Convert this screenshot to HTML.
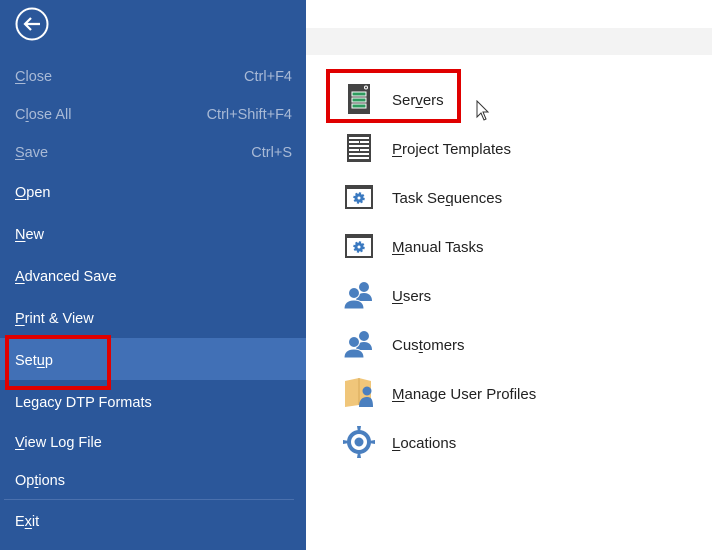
<!DOCTYPE html>
<html><head><meta charset="utf-8"><style>
body{margin:0;width:712px;height:550px;position:relative;background:#fff;font-family:"Liberation Sans",sans-serif;overflow:hidden}
#side{position:absolute;left:0;top:0;width:306px;height:550px;background:#2b579a}
.it{position:absolute;left:15px;font-size:14.5px;color:#fff;line-height:18px;transform:translateY(-7px)}
.dis{color:#a9bad6}
.sc{position:absolute;right:14px;font-size:14.5px;color:#a9bad6;line-height:18px;transform:translateY(-7px)}
.r{position:absolute;left:392px;font-size:15px;color:#222;line-height:18px;transform:translateY(-7px)}
.ic{position:absolute;left:343px;width:32px;height:32px;transform:translateY(-16px)}
u{text-decoration:underline;text-underline-offset:2px}
</style></head><body>
<div id="side">
<svg style="position:absolute;left:15px;top:7px" width="34" height="34" viewBox="0 0 34 34"><circle cx="17" cy="17" r="15.5" fill="none" stroke="#fff" stroke-width="2"/><path d="M25 17H10M16 11l-6 6 6 6" fill="none" stroke="#fff" stroke-width="2.2"/></svg>
<div style="position:absolute;left:0;top:338px;width:306px;height:42px;background:#4170b6"></div>
<div style="position:absolute;left:5px;top:335px;width:98px;height:47px;border:4px solid #e00000"></div>
<div style="position:absolute;left:4px;top:499px;width:290px;height:1px;background:#4a70ad"></div>
<div class="it dis" style="top:75px"><u>C</u>lose</div><div class="sc" style="top:75px">Ctrl+F4</div>
<div class="it dis" style="top:113px">C<u>l</u>ose All</div><div class="sc" style="top:113px">Ctrl+Shift+F4</div>
<div class="it dis" style="top:151px"><u>S</u>ave</div><div class="sc" style="top:151px">Ctrl+S</div>
<div class="it" style="top:191px"><u>O</u>pen</div>
<div class="it" style="top:233px"><u>N</u>ew</div>
<div class="it" style="top:275px"><u>A</u>dvanced Save</div>
<div class="it" style="top:317px"><u>P</u>rint &amp; View</div>
<div class="it" style="top:359px">Set<u>u</u>p</div>
<div class="it" style="top:401px">Legacy DTP Formats</div>
<div class="it" style="top:441px"><u>V</u>iew Log File</div>
<div class="it" style="top:479px">Op<u>t</u>ions</div>
<div class="it" style="top:520px">E<u>x</u>it</div>
</div>
<div style="position:absolute;left:306px;top:28px;width:406px;height:27px;background:#f3f3f3"></div>
<div style="position:absolute;left:326px;top:69px;width:127px;height:46px;border:4px solid #e00000"></div>
<svg style="position:absolute;left:476px;top:100px" width="14" height="22" viewBox="0 0 14 22"><path d="M1 1v16l4-4 3 7 2-1-3-7h5z" fill="#fff" stroke="#333" stroke-width="1"/></svg>

<svg class="ic" style="top:99px" viewBox="0 0 32 32"><rect x="5" y="1" width="22" height="30" fill="#444"/><circle cx="23" cy="4.5" r="1.5" fill="none" stroke="#fff"/><rect x="9" y="9" width="14" height="4" fill="#2e9b5e" stroke="#fff"/><rect x="9" y="15" width="14" height="4" fill="#2e9b5e" stroke="#fff"/><rect x="9" y="21" width="14" height="4" fill="#2e9b5e" stroke="#fff"/></svg>
<div class="r" style="top:99px">Ser<u>v</u>ers</div>
<svg class="ic" style="top:148px" viewBox="0 0 32 32"><rect x="4" y="2" width="24" height="28" fill="#444"/><g fill="#fff"><rect x="6" y="5" width="20" height="2"/><rect x="6" y="9" width="10" height="2"/><rect x="17" y="9" width="9" height="2"/><rect x="6" y="13" width="20" height="2"/><rect x="6" y="17" width="10" height="2"/><rect x="17" y="17" width="9" height="2"/><rect x="6" y="21" width="20" height="2"/><rect x="6" y="25" width="20" height="2"/></g></svg>
<div class="r" style="top:148px"><u>P</u>roject Templates</div>
<svg class="ic" style="top:197px" viewBox="0 0 32 32"><rect x="2" y="4" width="28" height="24" fill="#444"/><rect x="4" y="8" width="24" height="18" fill="#fff"/><circle cx="16" cy="17" r="4.5" fill="#3a79c0" stroke="#3a79c0" stroke-width="2.5" stroke-dasharray="2 1.5"/><circle cx="16" cy="17" r="1.5" fill="#fff"/></svg>
<div class="r" style="top:197px">Task Se<u>q</u>uences</div>
<svg class="ic" style="top:246px" viewBox="0 0 32 32"><rect x="2" y="4" width="28" height="24" fill="#444"/><rect x="4" y="8" width="24" height="18" fill="#fff"/><circle cx="16" cy="17" r="4.5" fill="#3a79c0" stroke="#3a79c0" stroke-width="2.5" stroke-dasharray="2 1.5"/><circle cx="16" cy="17" r="1.5" fill="#fff"/></svg>
<div class="r" style="top:246px"><u>M</u>anual Tasks</div>
<svg class="ic" style="top:295px" viewBox="0 0 32 32"><g fill="#4a7fbf"><circle cx="21" cy="8" r="5"/><path d="M13 22c0-6 4-8 8-8s8 2 8 8z"/><circle cx="11" cy="14" r="5.5" stroke="#fff" stroke-width="1"/><path d="M1 30c0-7 5-9 10-9s10 2 10 9z" stroke="#fff" stroke-width="1"/></g></svg>
<div class="r" style="top:295px"><u>U</u>sers</div>
<svg class="ic" style="top:344px" viewBox="0 0 32 32"><g fill="#4a7fbf"><circle cx="21" cy="8" r="5"/><path d="M13 22c0-6 4-8 8-8s8 2 8 8z"/><circle cx="11" cy="14" r="5.5" stroke="#fff" stroke-width="1"/><path d="M1 30c0-7 5-9 10-9s10 2 10 9z" stroke="#fff" stroke-width="1"/></g></svg>
<div class="r" style="top:344px">Cus<u>t</u>omers</div>
<svg class="ic" style="top:393px" viewBox="0 0 32 32"><path d="M2 4l14-3 12 3v26l-12-2-14 2z" fill="#f0c67a"/><path d="M16 1v27" stroke="#d8a95a"/><circle cx="24" cy="14" r="4.5" fill="#4a7fbf"/><path d="M16 30c0-8 4-10 8-10s6 2 6 10z" fill="#4a7fbf"/></svg>
<div class="r" style="top:393px"><u>M</u>anage User Profiles</div>
<svg class="ic" style="top:442px" viewBox="0 0 32 32"><circle cx="16" cy="16" r="10" fill="none" stroke="#4a7fbf" stroke-width="4"/><circle cx="16" cy="16" r="4.5" fill="#4a7fbf"/><g fill="#4a7fbf"><path d="M14 0h4l-1 6h-2z"/><path d="M14 32h4l-1-6h-2z"/><path d="M0 14v4l6-1v-2z"/><path d="M32 14v4l-6-1v-2z"/></g></svg>
<div class="r" style="top:442px"><u>L</u>ocations</div>
</body></html>
